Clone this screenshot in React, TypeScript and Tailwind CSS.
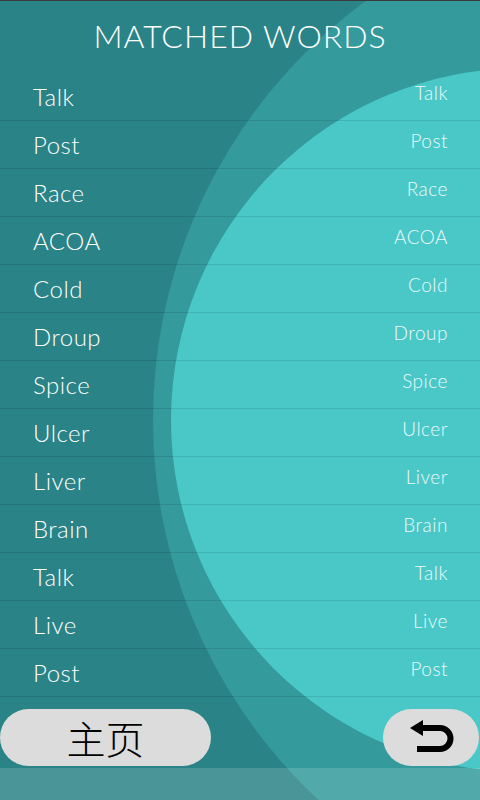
import React from 'react';

const words = ['Talk', 'Post', 'Race', 'ACOA', 'Cold', 'Droup', 'Spice', 'Ulcer', 'Liver', 'Brain', 'Talk', 'Live', 'Post'];

const font = { fontFamily: '"Century Gothic", Lato, "Noto Sans CJK SC", sans-serif' };

const App: React.FC = () => {
  return (
    <div className="relative w-[480px] h-[800px] overflow-hidden bg-[#2a8386]" style={font}>
      {/* Background curves */}
      <svg className="absolute inset-0" width="480" height="800" viewBox="0 0 480 800">
        <circle cx="672" cy="420" r="519" fill="#349a9c" />
        <circle cx="523" cy="420" r="352" fill="#4ac8c8" />
        <rect x="0" y="768" width="480" height="32" fill="#ffffff" fillOpacity="0.15" />
        <rect x="0" y="0" width="480" height="1" fill="#3a3a3a" />
      </svg>

      <div className="relative flex flex-col">
        {/* Header */}
        <div className="h-[73px] flex items-center justify-center">
          <h1 className="text-white text-[32px] font-light leading-none tracking-[1px] pb-[1px]">MATCHED WORDS</h1>
        </div>

        {/* Word list */}
        <div className="flex flex-col">
          {words.map((w, i) => (
            <div key={i} className="h-[48px] flex items-center justify-between border-b border-black/10 pl-[33px] pr-[32px]">
              <span className="text-white text-[24px] font-light leading-none tracking-[0.5px]">{w}</span>
              <span className="text-[#eafafa] text-[19px] font-light leading-none tracking-[0.5px] mb-[8px]">{w}</span>
            </div>
          ))}
        </div>

        {/* Buttons */}
        <div className="h-[70px] flex items-end justify-between pb-[1px]">
          <button className="w-[211px] h-[57px] rounded-full bg-[#dcdcdc] flex items-center justify-center text-black text-[39px] leading-none" style={{ fontFamily: '"Noto Sans CJK SC", sans-serif', fontWeight: 300 }}>
            主页
          </button>
          <button className="w-[96px] h-[57px] rounded-full bg-[#dcdcdc] flex items-center justify-center mr-[1px]">
            <svg width="46" height="40" viewBox="0 0 46 40">
              <path d="M2 10 L15 2 L15 18 Z" fill="#000" />
              <path d="M13 10 H32 a10.5 10.5 0 0 1 0 21 H9" fill="none" stroke="#000" strokeWidth="6" />
            </svg>
          </button>
        </div>
      </div>
    </div>
  );
};

export default App;
